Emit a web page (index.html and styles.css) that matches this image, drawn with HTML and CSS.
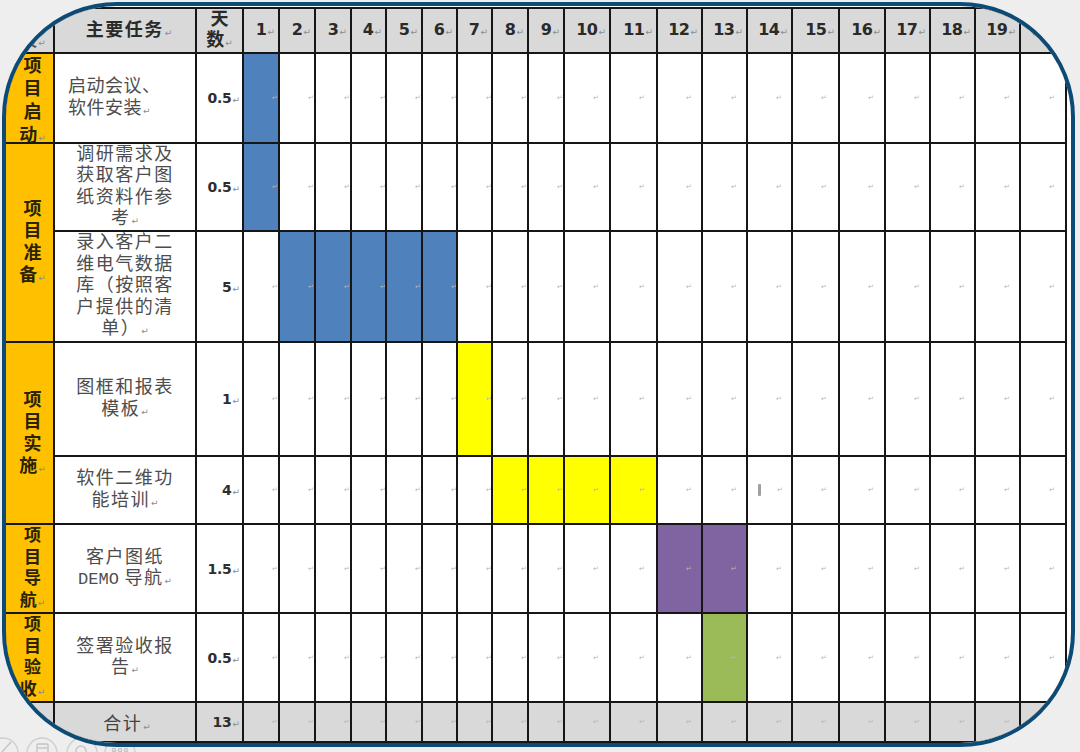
FILE: index.html
```html
<!DOCTYPE html>
<html lang="zh-CN">
<head>
<meta charset="utf-8">
<title>项目计划</title>
<link rel="stylesheet" href="styles.css">
</head>
<body>
<div class="stage">
  <div class="frame">
    <div class="gantt">
      <!-- header -->
      <div class="hd ph-h"><p class="tx">阶<br>段<span class="pm">↵</span></p></div>
      <div class="hd task-h"><p class="tx">主要任务<span class="pm">↵</span></p></div>
      <div class="hd days-h"><p class="tx">天<br>数<span class="pm">↵</span></p></div>
      <div class="hd num"><p class="tx">1<span class="pm">↵</span></p></div>
      <div class="hd num"><p class="tx">2<span class="pm">↵</span></p></div>
      <div class="hd num"><p class="tx">3<span class="pm">↵</span></p></div>
      <div class="hd num"><p class="tx">4<span class="pm">↵</span></p></div>
      <div class="hd num"><p class="tx">5<span class="pm">↵</span></p></div>
      <div class="hd num"><p class="tx">6<span class="pm">↵</span></p></div>
      <div class="hd num"><p class="tx">7<span class="pm">↵</span></p></div>
      <div class="hd num"><p class="tx">8<span class="pm">↵</span></p></div>
      <div class="hd num"><p class="tx">9<span class="pm">↵</span></p></div>
      <div class="hd num"><p class="tx">10<span class="pm">↵</span></p></div>
      <div class="hd num"><p class="tx">11<span class="pm">↵</span></p></div>
      <div class="hd num"><p class="tx">12<span class="pm">↵</span></p></div>
      <div class="hd num"><p class="tx">13<span class="pm">↵</span></p></div>
      <div class="hd num"><p class="tx">14<span class="pm">↵</span></p></div>
      <div class="hd num"><p class="tx">15<span class="pm">↵</span></p></div>
      <div class="hd num"><p class="tx">16<span class="pm">↵</span></p></div>
      <div class="hd num"><p class="tx">17<span class="pm">↵</span></p></div>
      <div class="hd num"><p class="tx">18<span class="pm">↵</span></p></div>
      <div class="hd num"><p class="tx">19<span class="pm">↵</span></p></div>
      <div class="hd num"><p class="tx">20<span class="pm">↵</span></p></div>

      <!-- row 1 -->
      <div class="ph ph-first"><p class="tx">项<br>目<br>启<br>动<span class="pm">↵</span></p></div>
      <div class="task task-left"><p class="tx">启动会议、<br>软件安装<span class="pm">↵</span></p></div>
      <div class="days"><p class="tx">0.5<span class="pm">↵</span></p></div>
      <span class="c blue"></span><span class="c"></span><span class="c"></span><span class="c"></span><span class="c"></span><span class="c"></span><span class="c"></span><span class="c"></span><span class="c"></span><span class="c"></span><span class="c"></span><span class="c"></span><span class="c"></span><span class="c"></span><span class="c"></span><span class="c"></span><span class="c"></span><span class="c"></span><span class="c"></span><span class="c"></span>

      <!-- row 2 -->
      <div class="ph span2"><p class="tx">项<br>目<br>准<br>备<span class="pm">↵</span></p></div>
      <div class="task"><p class="tx">调研需求及<br>获取客户图<br>纸资料作参<br>考<span class="pm">↵</span></p></div>
      <div class="days"><p class="tx">0.5<span class="pm">↵</span></p></div>
      <span class="c blue"></span><span class="c"></span><span class="c"></span><span class="c"></span><span class="c"></span><span class="c"></span><span class="c"></span><span class="c"></span><span class="c"></span><span class="c"></span><span class="c"></span><span class="c"></span><span class="c"></span><span class="c"></span><span class="c"></span><span class="c"></span><span class="c"></span><span class="c"></span><span class="c"></span><span class="c"></span>

      <!-- row 3 -->
      <div class="task"><p class="tx">录入客户二<br>维电气数据<br>库（按照客<br>户提供的清<br>单）<span class="pm">↵</span></p></div>
      <div class="days"><p class="tx">5<span class="pm">↵</span></p></div>
      <span class="c"></span><span class="c blue"></span><span class="c blue"></span><span class="c blue"></span><span class="c blue"></span><span class="c blue"></span><span class="c"></span><span class="c"></span><span class="c"></span><span class="c"></span><span class="c"></span><span class="c"></span><span class="c"></span><span class="c"></span><span class="c"></span><span class="c"></span><span class="c"></span><span class="c"></span><span class="c"></span><span class="c"></span>

      <!-- row 4 -->
      <div class="ph span2"><p class="tx">项<br>目<br>实<br>施<span class="pm">↵</span></p></div>
      <div class="task"><p class="tx">图框和报表<br>模板<span class="pm">↵</span></p></div>
      <div class="days"><p class="tx">1<span class="pm">↵</span></p></div>
      <span class="c"></span><span class="c"></span><span class="c"></span><span class="c"></span><span class="c"></span><span class="c"></span><span class="c yellow"></span><span class="c"></span><span class="c"></span><span class="c"></span><span class="c"></span><span class="c"></span><span class="c"></span><span class="c"></span><span class="c"></span><span class="c"></span><span class="c"></span><span class="c"></span><span class="c"></span><span class="c"></span>

      <!-- row 5 -->
      <div class="task"><p class="tx">软件二维功<br>能培训<span class="pm">↵</span></p></div>
      <div class="days"><p class="tx">4<span class="pm">↵</span></p></div>
      <span class="c"></span><span class="c"></span><span class="c"></span><span class="c"></span><span class="c"></span><span class="c"></span><span class="c"></span><span class="c yellow"></span><span class="c yellow"></span><span class="c yellow"></span><span class="c yellow"></span><span class="c"></span><span class="c"></span><span class="c cur"><span class="caret"></span></span><span class="c"></span><span class="c"></span><span class="c"></span><span class="c"></span><span class="c"></span><span class="c"></span>

      <!-- row 6 -->
      <div class="ph ph-tight"><p class="tx">项<br>目<br>导<br>航<span class="pm">↵</span></p></div>
      <div class="task"><p class="tx">客户图纸<br><span class="lat">DEMO</span> 导航<span class="pm">↵</span></p></div>
      <div class="days"><p class="tx">1.5<span class="pm">↵</span></p></div>
      <span class="c"></span><span class="c"></span><span class="c"></span><span class="c"></span><span class="c"></span><span class="c"></span><span class="c"></span><span class="c"></span><span class="c"></span><span class="c"></span><span class="c"></span><span class="c purple"></span><span class="c purple"></span><span class="c"></span><span class="c"></span><span class="c"></span><span class="c"></span><span class="c"></span><span class="c"></span><span class="c"></span>

      <!-- row 7 -->
      <div class="ph ph-tight"><p class="tx">项<br>目<br>验<br>收<span class="pm">↵</span></p></div>
      <div class="task"><p class="tx">签署验收报<br>告<span class="pm">↵</span></p></div>
      <div class="days"><p class="tx">0.5<span class="pm">↵</span></p></div>
      <span class="c"></span><span class="c"></span><span class="c"></span><span class="c"></span><span class="c"></span><span class="c"></span><span class="c"></span><span class="c"></span><span class="c"></span><span class="c"></span><span class="c"></span><span class="c"></span><span class="c green"></span><span class="c"></span><span class="c"></span><span class="c"></span><span class="c"></span><span class="c"></span><span class="c"></span><span class="c"></span>

      <!-- total -->
      <div class="tot"></div>
      <div class="tot task-tot"><p class="tx">合计<span class="pm">↵</span></p></div>
      <div class="tot days"><p class="tx">13<span class="pm">↵</span></p></div>
      <span class="c tot"></span><span class="c tot"></span><span class="c tot"></span><span class="c tot"></span><span class="c tot"></span><span class="c tot"></span><span class="c tot"></span><span class="c tot"></span><span class="c tot"></span><span class="c tot"></span><span class="c tot"></span><span class="c tot"></span><span class="c tot"></span><span class="c tot"></span><span class="c tot"></span><span class="c tot"></span><span class="c tot"></span><span class="c tot"></span><span class="c tot"></span><span class="c tot"></span>
    </div>
  </div>

  <svg class="controls" width="140" height="19" viewBox="0 0 140 19" aria-hidden="true">
    <g fill="none" stroke="#cfcfcf" stroke-width="1.4">
      <circle cx="3" cy="20" r="15"/>
      <circle cx="42" cy="20" r="15"/>
      <circle cx="82" cy="20" r="15"/>
      <circle cx="120" cy="20" r="15"/>
    </g>
    <g fill="none" stroke="#c4c4c4" stroke-width="1.4">
      <path d="M2 19 L11 9"/>
      <rect x="37" y="11" width="11" height="9" rx="1"/>
      <path d="M38 15 H47"/>
      <circle cx="81" cy="18" r="5"/>
      <circle cx="114" cy="17" r="1.6"/>
      <circle cx="120" cy="17" r="1.6"/>
      <circle cx="126" cy="17" r="1.6"/>
    </g>
  </svg>
</div>
</body>
</html>
```

FILE: styles.css
```css
html, body {
  margin: 0;
  padding: 0;
}

body {
  width: 1080px;
  height: 752px;
  overflow: hidden;
  background: #eeeeee;
  font-family: "Noto Sans CJK SC", "Noto Sans", sans-serif;
}

.stage {
  position: relative;
  box-sizing: border-box;
  height: 752px;
  padding: 2px;
}

.frame {
  position: relative;
  z-index: 1;
  box-sizing: border-box;
  width: 1073px;
  height: 745px;
  border: 4px solid #0d4b77;
  border-radius: 115px;
  overflow: hidden;
  background: #ffffff;
}

.gantt {
  display: grid;
  grid-template-columns: 47px 140px 45px 34px 34px 34px 33px 34px 33px 33px 34px 34px 44px 45px 43px 43px 43px 45px 44px 43px 43px 43px 44px;
  grid-template-rows: 43px 88px 86px 109px 112px 66px 87px 87px 38px;
  gap: 2px;
  padding: 2px 2px 2px 0;
  margin-top: 1px;
  width: max-content;
  background: #161616;
}

.gantt > * {
  display: flex;
  align-items: center;
  justify-content: center;
  overflow: hidden;
  background: #ffffff;
  min-width: 0;
}

.tx {
  margin: 0;
  text-align: center;
  white-space: nowrap;
}

.pm {
  font-family: "DejaVu Sans", sans-serif;
  font-size: 9px;
  font-weight: normal;
  letter-spacing: 0;
  color: #8c8c8c;
  margin-left: 1px;
}

/* header */
.hd {
  background: #d9d9d9;
  color: #2a2a2a;
  font-weight: 700;
}

.hd .tx {
  font-size: 18px;
  line-height: 21px;
}

.task-h .tx {
  letter-spacing: 1.5px;
  padding-left: 8px;
}

.ph-h .tx {
  padding-left: 6px;
  color: #555;
}

.num {
  justify-content: flex-end;
  padding-right: 3px;
}

.num .tx {
  font-family: "DejaVu Sans", sans-serif;
  font-size: 16px;
  letter-spacing: -0.5px;
}

/* phase column */
.ph {
  background: #ffc000;
}

.ph .tx {
  padding-left: 6px;
  font-size: 18px;
  line-height: 22px;
  font-weight: 700;
  color: #2b2200;
}

.ph-first .tx {
  line-height: 23px;
  padding-top: 6px;
}

.ph-tight .tx {
  font-size: 17px;
  line-height: 21.5px;
}

.span2 {
  grid-row: span 2;
}

/* task column */
.task .tx {
  font-size: 18px;
  line-height: 21.5px;
  letter-spacing: 1.5px;
  color: #4d4d4d;
}

.task-left {
  justify-content: flex-start;
}

.task-left .tx {
  text-align: left;
  padding-left: 13px;
  letter-spacing: 0.5px;
}

.lat {
  font-family: "Liberation Mono", monospace;
  font-size: 17px;
  letter-spacing: 0;
}

/* days column */
.days {
  justify-content: flex-end;
  padding-right: 2px;
}

.days .tx {
  font-family: "DejaVu Sans", sans-serif;
  font-weight: 700;
  font-size: 14px;
  color: #2e2e2e;
  letter-spacing: -0.3px;
}

/* gantt cells */
.c {
  justify-content: flex-start;
  padding-left: 28px;
}

.c::after {
  content: "↵";
  font-family: "DejaVu Sans", sans-serif;
  font-size: 7px;
  color: #b5b5b5;
}

.blue { background: #4f81bd; }
.yellow { background: #ffff00; }
.purple { background: #8064a2; }
.green { background: #9bbb59; }

.cur {
  padding-left: 10px;
}

.caret {
  display: inline-block;
  width: 3px;
  height: 12px;
  margin-right: 16px;
  background: #a0a0a0;
  border-radius: 1px;
}

/* total row */
.tot {
  background: #d9d9d9;
}

.task-tot .tx {
  font-size: 18px;
  letter-spacing: 1.5px;
  color: #444444;
  padding-left: 4px;
}

.controls {
  position: absolute;
  left: 0;
  top: 733px;
}
```
